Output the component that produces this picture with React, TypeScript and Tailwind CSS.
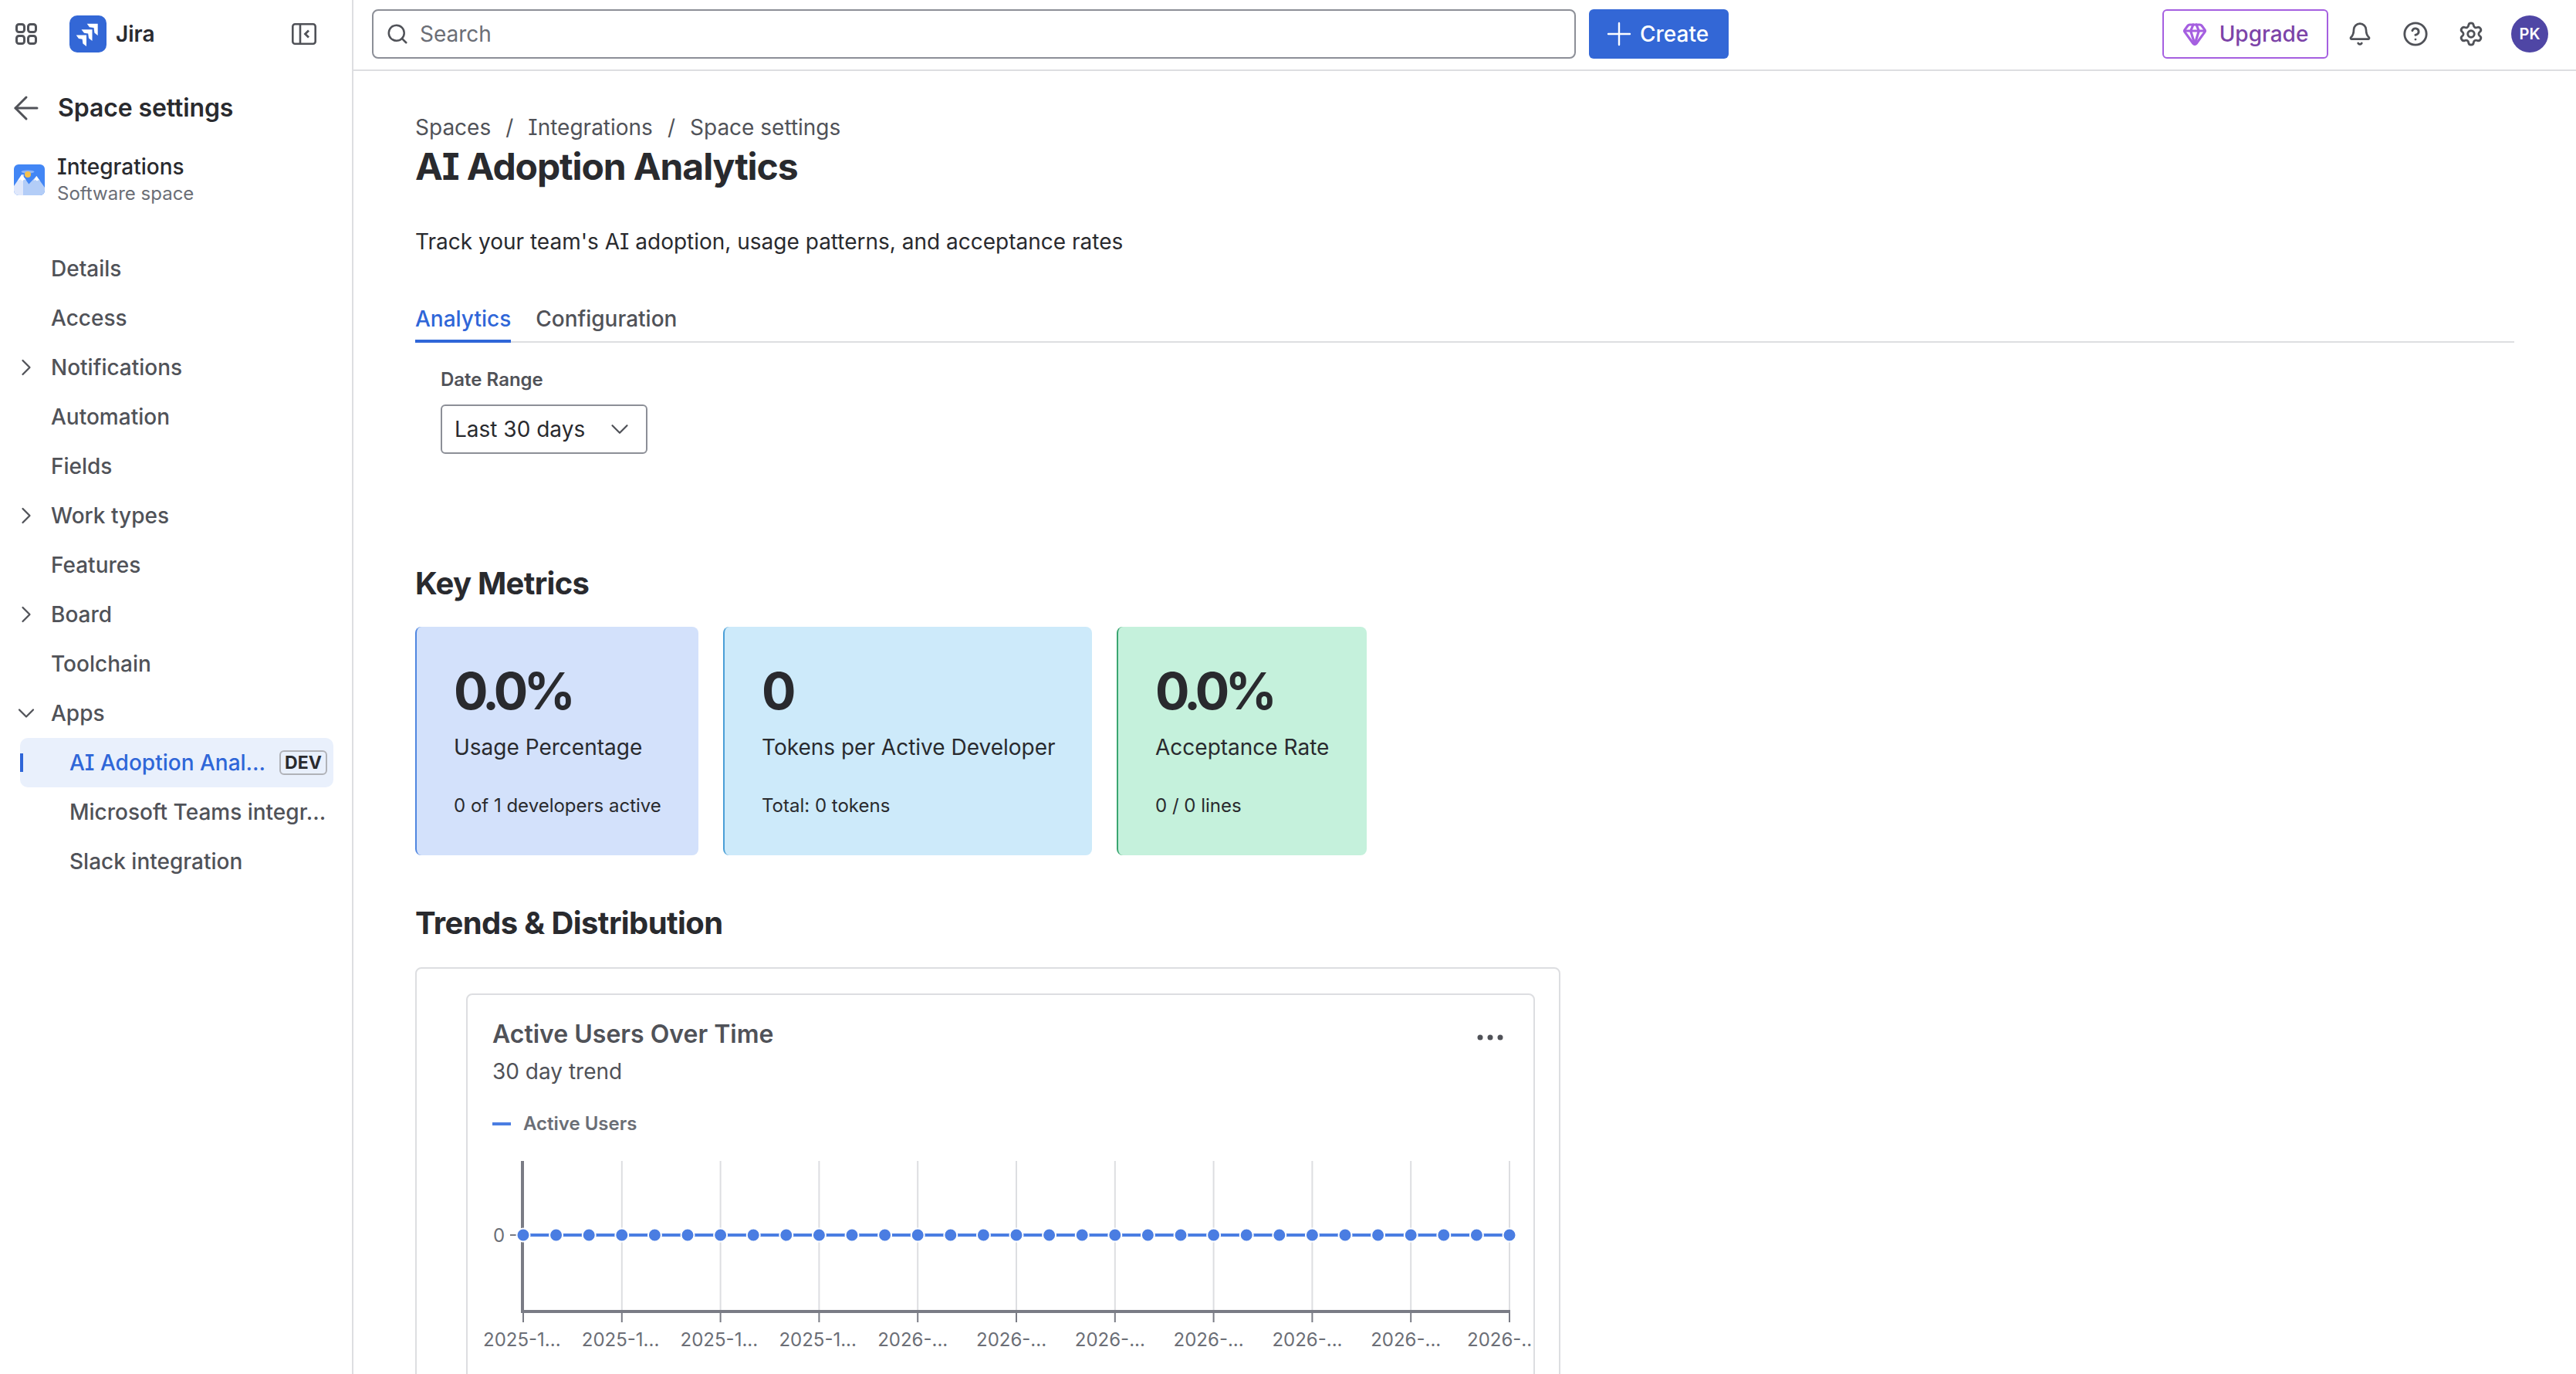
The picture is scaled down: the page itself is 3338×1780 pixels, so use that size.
import React from 'react';
import { ArrowLeft, Bell, ChevronDown, ChevronRight, CircleHelp, Gem, Plus, Search, Settings } from 'lucide-react';

const navItems = [
  { label: 'Details' },
  { label: 'Access' },
  { label: 'Notifications', chevron: 'right' },
  { label: 'Automation' },
  { label: 'Fields' },
  { label: 'Work types', chevron: 'right' },
  { label: 'Features' },
  { label: 'Board', chevron: 'right' },
  { label: 'Toolchain' },
  { label: 'Apps', chevron: 'down' },
];

const metrics = [
  { value: '0.0%', label: 'Usage Percentage', sub: '0 of 1 developers active', card: 'w-[367px] bg-[#d3e1fb] border-[#4f86e0]' },
  { value: '0', label: 'Tokens per Active Developer', sub: 'Total: 0 tokens', card: 'w-[478px] bg-[#cdeafa] border-[#4a9fd6]' },
  { value: '0.0%', label: 'Acceptance Rate', sub: '0 / 0 lines', card: 'w-[324px] bg-[#c5f1dc] border-[#3aa570]' },
];

const xLabels = ['2025-1...', '2025-1...', '2025-1...', '2025-1...', '2026-...', '2026-...', '2026-...', '2026-...', '2026-...', '2026-...', '2026-..'];

const JiraLogo = () => (
  <svg width="48" height="48" viewBox="0 0 48 48">
    <rect width="48" height="48" rx="10" fill="#3367d6" />
    <path d="M22.7 10.7H36.7V26L32.4 22.4 31.6 16 26 15.3Z" fill="#fff" />
    <path d="M15.5 18.2H29.5V33L25 29.6 24.2 23.5 19 22.8Z" fill="#fff" />
    <path d="M8.7 25.4H22V40L17.4 36.4 16.6 30.8 12 30Z" fill="#fff" />
  </svg>
);

const SpaceIcon = () => (
  <svg width="40" height="40" viewBox="0 0 40 40">
    <defs>
      <clipPath id="space-box">
        <rect width="40" height="40" rx="6" />
      </clipPath>
    </defs>
    <g clipPath="url(#space-box)">
      <rect width="40" height="40" fill="#4286f5" />
      <ellipse cx="18" cy="9.5" rx="8.5" ry="2" fill="#8db4f8" />
      <circle cx="18" cy="13" r="4" fill="#f5c14e" />
      <path d="M29.3 15 40 30V40H18V27Z" fill="#b3cdf7" />
      <path d="M10.3 13 0 28V40H12.7V13Z" fill="#e0e8fb" />
      <path d="M10.3 13 24 32V40H12.7V13Z" fill="#b3cdf7" />
      <path d="M10.3 13 5 21 8.5 19.5 11 21.5 13.5 19.5 16 20.5Z" fill="#fff" />
      <path d="M29.3 15 25.5 21 28 20 30 21.5 32 20 34 21.5Z" fill="#fff" />
    </g>
  </svg>
);

const Sidebar = () => (
  <aside className="w-[458px] shrink-0 border-r-2 border-[#dddee1] bg-white">
    <div className="flex h-[88px] items-center pl-[20px]">
      <svg width="28" height="28" viewBox="0 0 28 28" fill="none" stroke="#505258" strokeWidth="3">
        <rect x="1.5" y="1.5" width="10" height="10" rx="3" />
        <rect x="16.5" y="1.5" width="10" height="10" rx="3" />
        <rect x="1.5" y="16.5" width="10" height="10" rx="3" />
        <rect x="16.5" y="16.5" width="10" height="10" rx="3" />
      </svg>
      <div className="ml-[42px]"><JiraLogo /></div>
      <span className="ml-[12px] text-[28px] font-semibold text-[#292a2e]">Jira</span>
      <svg className="ml-[177px]" width="32" height="28" viewBox="0 0 32 28" fill="none" stroke="#505258" strokeWidth="2.6">
        <rect x="1.3" y="1.3" width="29.4" height="25.4" rx="3" />
        <path d="M11 1.3V26.7" />
        <path d="M22 9.5 17.5 14 22 18.5" strokeWidth="2.8" />
      </svg>
    </div>
    <div className="mt-[20px] flex h-[64px] items-center pl-[20px]">
      <ArrowLeft size={48} strokeWidth={1.5} color="#505258" className="-ml-[10px] -my-2" />
      <span className="ml-[17px] text-[32px] font-semibold tracking-[-0.1px] text-[#292a2e]">Space settings</span>
    </div>
    <div className="mt-[26px] flex items-center pl-[18px]">
      <SpaceIcon />
      <div className="ml-[16px]">
        <div className="h-[36px] text-[28px] leading-[36px] font-medium text-[#292a2e]">Integrations</div>
        <div className="h-[34px] text-[24px] leading-[34px] text-[#6b6e76]">Software space</div>
      </div>
    </div>
    <nav className="mt-[48px] pl-[26px] pr-[24px]">
      {navItems.map((item) => (
        <div key={item.label} className="flex h-16 items-center text-[28px] font-medium text-[#505258]">
          <span className="mr-6 flex w-4 justify-center">
            {item.chevron === 'right' && <ChevronRight size={36} strokeWidth={1.5} className="-my-2 shrink-0" />}
            {item.chevron === 'down' && <ChevronDown size={36} strokeWidth={1.5} className="-my-2 shrink-0" />}
          </span>
          {item.label}
        </div>
      ))}
      <div className="relative flex h-16 items-center rounded-[10px] bg-[#e9f0fc] pl-[64px] pr-[8px] text-[28px] font-medium text-[#2f66d8]">
        <span className="absolute left-0 top-[20px] h-[24px] w-[4px] bg-[#2f66d8]" />
        <span>AI Adoption Anal...</span>
        <span className="ml-auto flex h-[32px] w-[62px] items-center justify-center rounded-[6px] border-2 border-[#b0b2b8] text-[23px] font-bold text-[#292a2e]">DEV</span>
      </div>
      <div className="flex h-16 items-center pl-[64px] text-[28px] font-medium text-[#505258]">Microsoft Teams integr...</div>
      <div className="flex h-16 items-center pl-[64px] text-[28px] font-medium text-[#505258]">Slack integration</div>
    </nav>
  </aside>
);

const TopBar = () => (
  <header className="flex h-[92px] shrink-0 border-b-2 border-[#dddee1] bg-white pt-[12px]">
    <div className="ml-[24px] flex h-16 w-[1560px] items-center rounded-[8px] border-2 border-[#8c8f97] pl-[16px]">
      <Search size={30} strokeWidth={2} color="#505258" />
      <span className="ml-[14px] text-[28px] text-[#6b6e76]">Search</span>
    </div>
    <button className="ml-[17px] flex h-16 w-[181px] items-center gap-[3px] rounded-[6px] bg-[#3367d6] pl-[15px] text-[28px] font-medium text-white">
      <Plus size={48} strokeWidth={1.2} />
      Create
    </button>
    <button className="ml-[562px] flex h-16 w-[215px] items-center justify-center gap-[16px] rounded-[6px] border-2 border-[#a55fe0] text-[28px] font-medium text-[#7c44a8]">
      <Gem size={32} strokeWidth={2.4} color="#a55fe0" />
      Upgrade
    </button>
    <div className="flex h-16 items-center">
      <Bell size={32} strokeWidth={2} color="#505258" className="ml-[25px]" />
      <CircleHelp size={34} strokeWidth={2} color="#505258" className="ml-[39px]" />
      <Settings size={34} strokeWidth={2} color="#505258" className="ml-[38px]" />
      <div className="ml-[35px] flex h-[48px] w-[48px] items-center justify-center rounded-full bg-[#4f46a5] text-[20px] font-semibold text-white">PK</div>
    </div>
  </header>
);

// coordinates are the ones of the card interior, 606px from the page edge and 1490px from the top
const ActiveUsersChart = () => {
  const left = 72;
  const right = 1350;
  const top = 14;
  const axisY = 209;
  const lineY = 110;
  const ticks = xLabels.map((_, i) => left + ((right - left) * i) / 10);
  const points = Array.from({ length: 31 }, (_, i) => left + ((right - left) * i) / 30);
  return (
    <svg width="1381" height="300" className="mt-[18px] block" fontFamily="Inter, sans-serif">
      {ticks.map((x, i) => i > 0 && <line key={x} x1={x} x2={x} y1={top} y2={axisY} stroke="#dddee1" strokeWidth="2" />)}
      <line x1={left - 1} x2={left - 1} y1={top} y2={axisY + 2} stroke="#7a7c85" strokeWidth="4" />
      <line x1={left} x2={right + 1} y1={axisY} y2={axisY} stroke="#7a7c85" strokeWidth="4" />
      {ticks.map((x) => <line key={x} x1={x} x2={x} y1={axisY} y2={axisY + 14} stroke="#7a7c85" strokeWidth="2" />)}
      <text x="33" y={lineY + 9} fontSize="24" fill="#6b6e76">0</text>
      <line x1="55" x2="63" y1={lineY} y2={lineY} stroke="#7a7c85" strokeWidth="2" />
      <line x1={left} x2={right} y1={lineY} y2={lineY} stroke="#4a7de2" strokeWidth="4" />
      {points.map((x) => <circle key={x} cx={x} cy={lineY} r="8.5" fill="#4a7de2" stroke="#fff" strokeWidth="2" />)}
      {xLabels.map((label, i) => (
        <text key={i} x={ticks[i] - (i === 10 ? 55 : 52)} y={axisY + 45} fontSize="24" fill="#6b6e76">{label}</text>
      ))}
    </svg>
  );
};

export default function App() {
  return (
    <div className="flex h-[1780px] overflow-hidden bg-white font-['Inter',sans-serif] text-[#292a2e] [font-feature-settings:'cv08']">
      <Sidebar />
      <div className="flex min-w-0 flex-1 flex-col">
        <TopBar />
        <main className="overflow-hidden px-[80px] pt-[55px]">
          <div className="flex h-[36px] items-center text-[28px] text-[#505258]">
            <span>Spaces</span>
            <span className="mx-[19px]">/</span>
            <span>Integrations</span>
            <span className="mx-[19px]">/</span>
            <span>Space settings</span>
          </div>
          <h1 className="mt-[3px] h-[60px] text-[48px] leading-[60px] font-bold tracking-[-1.1px]">AI Adoption Analytics</h1>
          <p className="mt-[47px] h-[40px] text-[28px] leading-[40px]">Track your team's AI adoption, usage patterns, and acceptance rates</p>

          <div className="mt-[47px] flex h-16 gap-[32px] border-b-2 border-[#dddee1] text-[28px] font-medium">
            <div className="h-16 border-b-4 border-[#2f66d8] pt-[12px] text-[#2f66d8]">Analytics</div>
            <div className="h-16 pt-[12px] text-[#505258]">Configuration</div>
          </div>

          <div className="ml-[33px] mt-[32px]">
            <div className="h-[32px] text-[24px] leading-[32px] font-semibold text-[#505258]">Date Range</div>
            <div className="mt-[16px] flex h-16 w-[268px] items-center justify-between rounded-[6px] border-2 border-[#8c8f97] pl-[16px] pr-[15px] text-[28px]">
              Last 30 days
              <ChevronDown size={38} strokeWidth={1.4} color="#505258" />
            </div>
          </div>

          <h2 className="mt-[142px] h-[52px] text-[40px] leading-[52px] font-bold tracking-[-0.7px]">Key Metrics</h2>
          <div className="mt-[30px] flex gap-[32px]">
            {metrics.map((m) => (
              <div key={m.label} className={`${m.card} h-[296px] rounded-[8px] border-l-2 pl-[48px] pt-[45px]`}>
                <div className="h-[76px] text-[66px] leading-[76px] font-bold tracking-[-5.5px]">{m.value}</div>
                <div className="mt-[17px] h-[36px] text-[28px] leading-[36px]">{m.label}</div>
                <div className="mt-[42px] h-[32px] text-[24px] leading-[32px]">{m.sub}</div>
              </div>
            ))}
          </div>

          <h2 className="mt-[62px] h-[52px] text-[40px] leading-[52px] font-bold tracking-[-0.6px]">Trends &amp; Distribution</h2>
          <div className="mt-[31px] w-[1484px] rounded-[8px] border-2 border-[#dddee1] pb-[60px] pl-[64px] pr-[32px] pt-[32px]">
            <div className="w-[1385px] rounded-[8px] border-2 border-[#dddee1] pb-[40px] pt-[31px]">
              <div className="flex h-[40px] items-center justify-between pl-[32px] pr-[39px]">
                <span className="text-[32px] font-semibold text-[#505258]">Active Users Over Time</span>
                <svg className="mt-[8px]" width="34" height="8" viewBox="0 0 34 8" fill="#505258">
                  <circle cx="4" cy="4" r="3.5" />
                  <circle cx="17" cy="4" r="3.5" />
                  <circle cx="30" cy="4" r="3.5" />
                </svg>
              </div>
              <div className="mt-[10px] h-[36px] pl-[32px] text-[28px] leading-[36px] text-[#505258]">30 day trend</div>
              <div className="mt-[34px] flex h-[32px] items-center pl-[32px]">
                <span className="h-[4px] w-[24px] bg-[#4a7de2]" />
                <span className="ml-[16px] text-[24px] font-semibold text-[#6b6e76]">Active Users</span>
              </div>
              <ActiveUsersChart />
            </div>
          </div>
        </main>
      </div>
    </div>
  );
}
